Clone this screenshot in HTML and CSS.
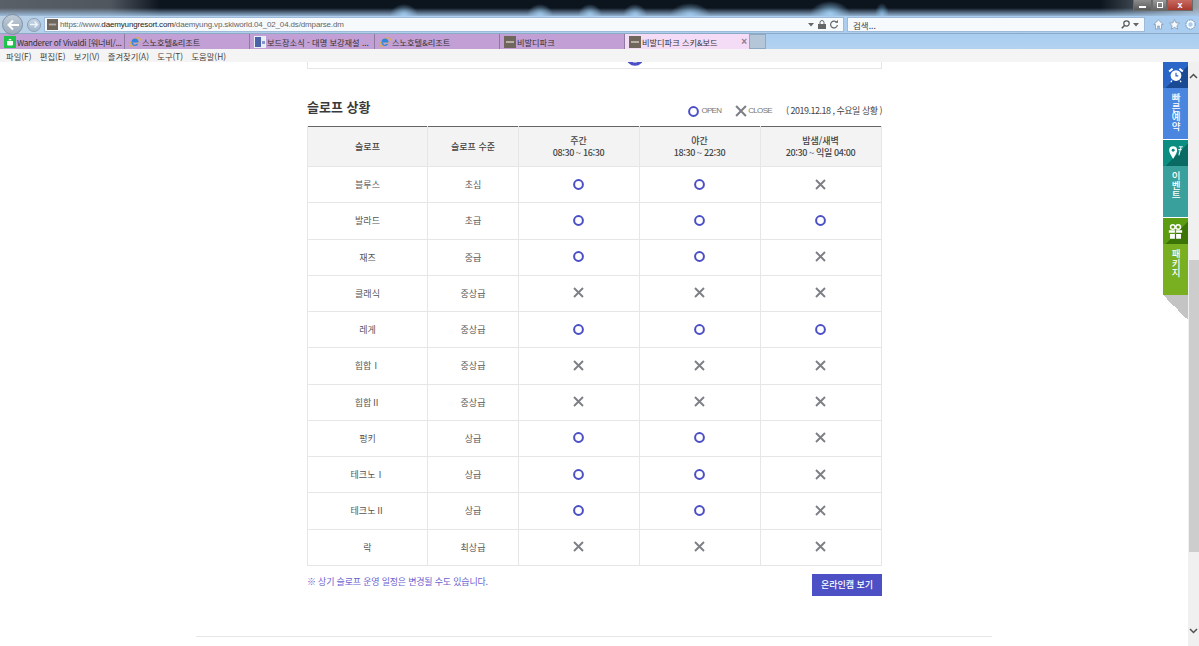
FILE: index.html
```html
<!DOCTYPE html>
<html lang="ko">
<head>
<meta charset="utf-8">
<title>비발디파크 스키&amp;보드</title>
<link rel="stylesheet" href="styles.css">
</head>
<body>
<svg class="defs" width="0" height="0" aria-hidden="true">
  <symbol id="o" viewBox="0 0 11 11"><circle cx="5.5" cy="5.5" r="4.4" fill="none" stroke="#4b4fc6" stroke-width="2"/></symbol>
  <symbol id="x" viewBox="0 0 11 11"><path d="M1 1l9 9M10 1l-9 9" fill="none" stroke="#7d7f86" stroke-width="1.9"/></symbol>
  <symbol id="fav" viewBox="0 0 12 12"><rect width="12" height="12" fill="#6f665c"/><rect x="2" y="5" width="8" height="2" fill="#b5aea5"/></symbol>
  <symbol id="ie" viewBox="0 0 12 12"><ellipse cx="6" cy="6" rx="6" ry="2.6" transform="rotate(-35 6 6)" fill="none" stroke="#e0b030" stroke-width="1"/><path d="M2.5 6.5h7c.2-2.5-1.4-4-3.5-4S2.400 4 2.500 6.500c0 2.300 1.700 3.500 3.500 3.500 1.500 0 2.700-.7 3.200-2H7.500c-.3.500-.9.800-1.500.800-1 0-1.800-.7-1.800-1.800z" fill="#2f86d8"/></symbol>
</svg>

<header class="chrome">
  <div class="titlebar">
    <div class="winbtns">
      <span class="win win-min"><i></i></span>
      <span class="win win-max"><i></i></span>
      <span class="win win-close">x</span>
    </div>
  </div>
  <div class="navbar">
    <span class="nav nav-back"><svg width="14" height="12" viewBox="0 0 14 12"><path d="M13 6H2.500M7 1.500L2.500 6 7 10.500" fill="none" stroke="#fff" stroke-width="2"/></svg></span>
    <span class="nav nav-fwd"><svg width="9" height="9" viewBox="0 0 9 9"><path d="M0 4.500h7M4.500 1.500L7.500 4.500l-3 3" fill="none" stroke="#eef4fb" stroke-width="1.400"/></svg></span>
    <div class="addr">
      <svg class="ico12" width="11" height="11"><use href="#fav"/></svg>
      <span class="url"><span class="dim">https://www.</span>daemyungresort.com<span class="dim">/daemyung.vp.skiworld.04_02_04.ds/dmparse.dm</span></span>
      <span class="addr-tools">
        <svg width="6" height="4" viewBox="0 0 6 4"><path d="M0 0h6L3 3.500z" fill="#666"/></svg>
        <svg width="8" height="9" viewBox="0 0 8 9"><path d="M2 4V2.500a2 2 0 014 0V4" fill="none" stroke="#666"/><rect y="4" width="8" height="5" fill="#666"/></svg>
        <svg width="8" height="9" viewBox="0 0 8 9"><path d="M6.800 2.500A3.400 3.400 0 107.400 5" fill="none" stroke="#666" stroke-width="1.200"/><path d="M5 2.800h3V0z" fill="#666"/></svg>
      </span>
    </div>
    <div class="search">
      <span class="search-text">검색...</span>
      <svg width="9" height="9" viewBox="0 0 9 9"><circle cx="5.500" cy="3.500" r="2.700" fill="none" stroke="#555" stroke-width="1.200"/><path d="M3.500 5.500L.8 8.300" stroke="#555" stroke-width="1.500"/></svg>
      <svg width="6" height="4" viewBox="0 0 6 4"><path d="M0 0h6L3 3.500z" fill="#666"/></svg>
    </div>
    <div class="tools">
      <svg width="11" height="11" viewBox="0 0 11 11"><path d="M5.500 1L.8 5.500h1.700V10h2.200V7h1.600v3h2.200V5.500h1.700z" fill="#f5f9fd" stroke="#7f8fa3" stroke-width=".7"/></svg>
      <svg width="11" height="11" viewBox="0 0 11 11"><path d="M5.500.6l1.500 3.200 3.500.4-2.600 2.400.7 3.500-3.100-1.800-3.100 1.800.7-3.500L.5 4.200 4 3.800z" fill="#f5f9fd" stroke="#7f8fa3" stroke-width=".7"/></svg>
      <svg width="11" height="11" viewBox="0 0 11 11"><circle cx="5.500" cy="5.500" r="3.200" fill="none" stroke="#f5f9fd" stroke-width="2"/><circle cx="5.500" cy="5.500" r="4.700" fill="none" stroke="#7f8fa3" stroke-width="1" stroke-dasharray="1.500 1"/></svg>
    </div>
  </div>
  <div class="tabbar">
    <div class="tab tab-long"><svg width="12" height="12" viewBox="0 0 12 12"><rect width="12" height="12" fill="#1fc24a"/><path d="M3 5h6v3.500a1 1 0 01-1 1H4a1 1 0 01-1-1zM4.500 4.300a1.500 1.500 0 013 0z" fill="#fff"/></svg><span>Wanderer of Vivaldi [워너비/...</span></div>
    <div class="tab"><svg width="12" height="12"><use href="#ie"/></svg><span>스노호텔&amp;리조트</span></div>
    <div class="tab"><svg width="12" height="12" viewBox="0 0 12 12"><rect width="12" height="12" fill="#e9edf5"/><rect x="1" y="1" width="6" height="10" fill="#4a62a8"/><rect x="8" y="5" width="3" height="3" fill="#8797c4"/></svg><span>보드장소식 - 대명 보강재설 ...</span></div>
    <div class="tab"><svg width="12" height="12"><use href="#ie"/></svg><span>스노호텔&amp;리조트</span></div>
    <div class="tab"><svg width="12" height="12"><use href="#fav"/></svg><span>비발디파크</span></div>
    <div class="tab tab-on"><svg width="12" height="12"><use href="#fav"/></svg><span>비발디파크 스키&amp;보드</span><b class="tab-x">×</b></div>
    <div class="tab-new"></div>
  </div>
  <nav class="menubar">
    <span>파일(F)</span><span>편집(E)</span><span>보기(V)</span><span>즐겨찾기(A)</span><span>도구(T)</span><span>도움말(H)</span>
  </nav>
</header>

<div class="view">
  <main class="page">
    <div class="content">
      <div class="prev-box"><svg class="prev-dot" width="18" height="18" viewBox="0 0 11 11"><use href="#o"/></svg></div>
      <div class="head-row">
        <h2>슬로프 상황</h2>
        <div class="legend">
          <svg width="11" height="11"><use href="#o"/></svg><span class="lg-t lg-open">OPEN</span>
          <svg width="12" height="12"><use href="#x"/></svg><span class="lg-t lg-close">CLOSE</span>
          <span class="lg-date">( 2019.12.18 , 수요일 상황 )</span>
        </div>
      </div>
      <table class="slopes">
        <colgroup><col class="c1"><col class="c2"><col class="c3"><col class="c3"><col class="c4"></colgroup>
        <thead>
          <tr><th>슬로프</th><th>슬로프 수준</th><th>주간<br><span class="hr">08:30 ~ 16:30</span></th><th>야간<br><span class="hr">18:30 ~ 22:30</span></th><th>밤샘/새벽<br><span class="hr">20:30 ~ 익일 04:00</span></th></tr>
        </thead>
        <tbody>
          <tr><td>블루스</td><td>초심</td><td><svg><use href="#o"/></svg></td><td><svg><use href="#o"/></svg></td><td><svg><use href="#x"/></svg></td></tr>
          <tr><td>발라드</td><td>초급</td><td><svg><use href="#o"/></svg></td><td><svg><use href="#o"/></svg></td><td><svg><use href="#o"/></svg></td></tr>
          <tr><td>재즈</td><td>중급</td><td><svg><use href="#o"/></svg></td><td><svg><use href="#o"/></svg></td><td><svg><use href="#x"/></svg></td></tr>
          <tr><td>클래식</td><td>중상급</td><td><svg><use href="#x"/></svg></td><td><svg><use href="#x"/></svg></td><td><svg><use href="#x"/></svg></td></tr>
          <tr><td>레게</td><td>중상급</td><td><svg><use href="#o"/></svg></td><td><svg><use href="#o"/></svg></td><td><svg><use href="#o"/></svg></td></tr>
          <tr><td>힙합Ⅰ</td><td>중상급</td><td><svg><use href="#x"/></svg></td><td><svg><use href="#x"/></svg></td><td><svg><use href="#x"/></svg></td></tr>
          <tr><td>힙합Ⅱ</td><td>중상급</td><td><svg><use href="#x"/></svg></td><td><svg><use href="#x"/></svg></td><td><svg><use href="#x"/></svg></td></tr>
          <tr><td>펑키</td><td>상급</td><td><svg><use href="#o"/></svg></td><td><svg><use href="#o"/></svg></td><td><svg><use href="#x"/></svg></td></tr>
          <tr><td>테크노Ⅰ</td><td>상급</td><td><svg><use href="#o"/></svg></td><td><svg><use href="#o"/></svg></td><td><svg><use href="#x"/></svg></td></tr>
          <tr><td>테크노Ⅱ</td><td>상급</td><td><svg><use href="#o"/></svg></td><td><svg><use href="#o"/></svg></td><td><svg><use href="#x"/></svg></td></tr>
          <tr><td>락</td><td>최상급</td><td><svg><use href="#x"/></svg></td><td><svg><use href="#x"/></svg></td><td><svg><use href="#x"/></svg></td></tr>
        </tbody>
      </table>
      <div class="foot-row">
        <p class="note">※ 상기 슬로프 운영 일정은 변경될 수도 있습니다.</p>
        <a class="btn">온라인캠 보기</a>
      </div>
    </div>
    <hr class="rule">
  </main>
  <div class="scrollbar">
    <svg class="sb-up" width="9" height="6" viewBox="0 0 9 6"><path d="M1 5l3.500-3.500L8 5" fill="none" stroke="#505050" stroke-width="1.500"/></svg>
    <div class="sb-thumb"></div>
    <svg class="sb-down" width="9" height="6" viewBox="0 0 9 6"><path d="M1 1l3.500 3.500L8 1" fill="none" stroke="#505050" stroke-width="1.500"/></svg>
  </div>
  <aside class="quick">
    <div class="qk qk-blue">
      <div class="qk-ic"><svg width="16" height="16" viewBox="0 0 14 14"><circle cx="7" cy="7.500" r="4.700" fill="#fff"/><path d="M7 5v2.800h2" fill="none" stroke="#2562c2"/><path d="M1 4l3-2.500M13 4l-3-2.500" stroke="#fff" stroke-width="1.800"/><path d="M3.500 12l-1 1.300M10.500 12l1 1.300" stroke="#fff"/></svg></div>
      <div class="qk-t">빠른예약</div>
    </div>
    <div class="qk qk-teal">
      <div class="qk-ic"><svg width="16" height="16" viewBox="0 0 14 14"><path d="M4.500 1a3.500 3.500 0 00-3.500 3.500C1 7 4.500 12 4.500 12S8 7 8 4.500A3.500 3.500 0 004.500 1z" fill="#fff"/><circle cx="4.500" cy="4.500" r="1.300" fill="#0b8a80"/><path d="M9.500 1.500h3.500M11.500 1.500L9.500 9" fill="none" stroke="#e4f6f3" stroke-width="1"/><path d="M9 4h3" stroke="#e4f6f3"/></svg></div>
      <div class="qk-t">이벤트</div>
    </div>
    <div class="qk qk-green">
      <div class="qk-ic"><svg width="17" height="17" viewBox="0 0 14 14"><path d="M1.500 6h5v2h-5zM7.500 6h5v2h-5zM2.500 9h4v4h-4zM7.500 9h4v4h-4z" fill="#fff"/><circle cx="4.800" cy="3.300" r="1.900" fill="none" stroke="#fff" stroke-width="1.200"/><circle cx="9.200" cy="3.300" r="1.900" fill="none" stroke="#fff" stroke-width="1.200"/></svg></div>
      <div class="qk-t">패키지</div>
    </div>
    <div class="qk-fold"></div>
  </aside>
</div>
</body>
</html>
```
FILE: styles.css
```css
* { box-sizing: border-box; }
html, body { margin: 0; height: 100%; overflow: hidden; background: #fff; }
body { font-family: "Noto Sans CJK KR", "Noto Sans", sans-serif; font-size: 9px; color: #555; width: 1199px; height: 646px; }
.defs { position: absolute; }

/* browser chrome */
.chrome { height: 62px; background: #a9cdf0; border-bottom: 1px solid #9a9a9a; }
.titlebar {
  height: 16px; display: flex; justify-content: flex-end; align-items: flex-start; padding-right: 6px;
  background:
    linear-gradient(180deg, rgba(169,205,240,0) 50%, rgba(169,205,240,.85) 100%),
    radial-gradient(ellipse 14px 11px at 404px 15px, #8fbfe2 0, rgba(143,191,226,0) 100%),
    radial-gradient(ellipse 13px 11px at 540px 15px, #8fbfe2 0, rgba(143,191,226,0) 100%),
    radial-gradient(ellipse 12px 11px at 590px 15px, #8fbfe2 0, rgba(143,191,226,0) 100%),
    radial-gradient(ellipse 12px 11px at 635px 15px, #8fbfe2 0, rgba(143,191,226,0) 100%),
    radial-gradient(ellipse 20px 12px at 690px 15px, #8fbfe2 0, rgba(143,191,226,0) 100%),
    radial-gradient(ellipse 20px 13px at 830px 14px, #94ccf2 0, rgba(148,204,242,0) 100%),
    radial-gradient(ellipse 7px 11px at 882px 14px, #5f94b8 0, rgba(95,148,184,0) 100%),
    linear-gradient(90deg, rgba(70,80,90,0) 1100px, rgba(170,178,186,.9) 1199px),
    linear-gradient(90deg, #5a6068 0, #50565e 110px, #0c141e 160px),
    #0c141e;
}
.winbtns { display: flex; height: 11px; }
.win { display: flex; align-items: center; justify-content: center; height: 11px; border: 1px solid #6a6a6a; border-top: 0; color: #fff; }
.win-min { width: 19px; background: linear-gradient(#8c8c8c, #5a5a5a); }
.win-min i { width: 7px; height: 2px; background: #fff; margin-top: 4px; }
.win-max { width: 15px; background: linear-gradient(#9a9a9a, #666); }
.win-max i { width: 6px; height: 6px; border: 1px solid #fff; }
.win-close { width: 26px; background: linear-gradient(#c86a60, #a8392e); font: bold 9px/10px "Liberation Sans", sans-serif; }

.navbar { height: 17px; display: flex; align-items: center; position: relative; background: linear-gradient(90deg, #bcd0e2 0, #b4d0ec 45px, #a9cdf0 100%); }
.nav { display: flex; align-items: center; justify-content: center; border-radius: 50%; flex: none; }
.nav-back { width: 21px; height: 21px; margin: 0 0 0 2px; background: linear-gradient(#c0ccd8, #9aabbc); border: 1px solid #7d90a4; }
.nav-fwd { width: 14px; height: 14px; margin: 0 0 0 4px; background: linear-gradient(#c4d4e4, #a4b8cc); border: 1px solid #8aa0b6; }
.addr { width: 800px; height: 15px; margin-left: 3px; display: flex; align-items: center; padding: 0 5px 0 2px; background: #f7fafd; border: 1px solid #9dbbd9; }
.ico12 { flex: none; }
.url { margin-left: 2px; font: 8px/12px "Liberation Sans", sans-serif; letter-spacing: -.15px; color: #222; flex: 1; }
.dim { color: #666; }
.addr-tools { display: flex; align-items: center; gap: 4px; }
.search { width: 298px; height: 15px; margin-left: 3px; display: flex; align-items: center; gap: 3px; padding: 0 5px; background: #f7fafd; border: 1px solid #9dbbd9; }
.search-text { flex: 1; font-size: 8.500px; color: #444; }
.tools { display: flex; gap: 5px; margin-left: 8px; }

.tabbar { height: 16px; display: flex; align-items: stretch; background: linear-gradient(#a9cdf0, #b3d2f0); border-top: 1px solid #8ea9c4; }
.tab { width: 125px; display: flex; align-items: center; gap: 0; padding-left: 4px; background: #c2a0d6; border-right: 1px solid #8d7a9e; color: #333; font-size: 8.200px; white-space: nowrap; overflow: hidden; }
.tab svg { flex: none; }
.tab span { margin-left: 1px; }
.tab-long span { letter-spacing: -.28px; }
.tab-on { width: 124px; background: #f4dcf6; border-right: 0; position: relative; }
.tab-x { margin-left: auto; margin-right: 2px; color: #8b7a8e; font: bold 10px/10px "Liberation Sans", sans-serif; }
.tab-new { width: 17px; background: #b4c6d8; border: 1px solid #8ea9c4; }

.menubar { height: 13px; display: flex; gap: 8.300px; align-items: center; padding-left: 6px; background: #f4f4f4; color: #444; font-size: 8.300px; }

/* page */
.view { display: flex; height: 584px; position: relative; overflow: hidden; }
.page { flex: 1; min-width: 0; overflow: hidden; background: #fff; }
.content { width: 575px; margin-left: 307px; }
.prev-box { height: 7px; border: 1px solid #e6e6e6; border-top: 0; overflow: hidden; }
.prev-dot { display: block; margin: -14px 0 0 318px; }
.head-row { height: 57px; display: flex; justify-content: space-between; align-items: flex-end; padding-bottom: 10px; }
h2 { margin: 0; font-size: 13px; line-height: 18px; font-weight: 700; color: #3a3a3a; }
.legend { display: flex; align-items: center; margin-bottom: -1px; }
.lg-t { font: 8px/12px "Liberation Sans", sans-serif; color: #777; letter-spacing: -.7px; }
.lg-open { margin: 0 14px 0 2px; }
.lg-close { margin: 0 14px 0 1px; }
.lg-date { color: #444; font-size: 9px; line-height: 12px; letter-spacing: -.5px; }
.legend svg { flex: none; }

.slopes { width: 574px; border-collapse: collapse; table-layout: fixed; border-top: 1px solid #666; }
.c1 { width: 120px; } .c2 { width: 91px; } .c3 { width: 121px; } .c4 { width: 121px; }
.slopes th { height: 40px; background: #f3f3f3; font-weight: 500; font-size: 9px; line-height: 12px; color: #444; border: 1px solid #e6e6e6; border-top: 0; text-align: center; padding: 0; }
.hr { letter-spacing: -.4px; }
.slopes td { height: 36.250px; font-size: 9px; color: #555; border: 1px solid #e6e6e6; text-align: center; padding: 0; }
.slopes td:nth-child(n+3), .slopes th:nth-child(n+3) { padding-right: 1px; }
.slopes td svg { display: block; width: 11px; height: 11px; margin: -1px auto 0; }
.foot-row { display: flex; justify-content: space-between; align-items: flex-start; padding-top: 8px; }
.note { margin: 1px 0 0; color: #6a62cf; font-size: 9px; line-height: 14px; letter-spacing: -.2px; }
.btn { width: 70px; height: 22px; display: flex; align-items: center; justify-content: center; background: #4c50c4; color: #fff; font-size: 9px; font-weight: 500; }
.rule { width: 796px; height: 1px; margin: 40px 0 0 196px; border: 0; background: #e6e6e6; }

/* scrollbar */
.scrollbar { width: 11px; flex: none; background: #f0f0f0; display: flex; flex-direction: column; align-items: center; position: relative; }
.sb-up { margin-top: 11px; flex: none; }
.sb-thumb { width: 10px; height: 292px; margin-top: 181px; background: #cdcdcd; flex: none; }
.sb-down { margin-top: 76px; flex: none; }

/* floating quick menu */
.quick { position: absolute; right: 11px; top: 0; width: 25px; }
.qk { height: 77px; margin-bottom: 1px; color: #fff; }
.qk-ic { height: 26px; display: flex; align-items: center; justify-content: center; }
.qk-t { height: 51px; padding-top: 5px; writing-mode: vertical-rl; text-orientation: upright; font-size: 9.500px; font-weight: 500; line-height: 25px; text-align: left; }
.qk-blue .qk-ic { background: linear-gradient(135deg, #2a66c8 55%, #1a4a94 55%); }
.qk-blue .qk-t { background: #4a86e0; }
.qk-teal .qk-ic { background: linear-gradient(135deg, #0b8d82 55%, #0a6a64 55%); }
.qk-teal .qk-t { background: #3aa09c; }
.qk-green .qk-ic { background: linear-gradient(135deg, #5c9c10 55%, #3c7408 55%); }
.qk-green .qk-t { background: #78b022; }
.qk-green { margin-bottom: 0; }
.qk-fold { width: 25px; height: 25px; background: linear-gradient(45deg, rgba(196,196,196,0) 50%, #c4c4c4 50%); }
```
